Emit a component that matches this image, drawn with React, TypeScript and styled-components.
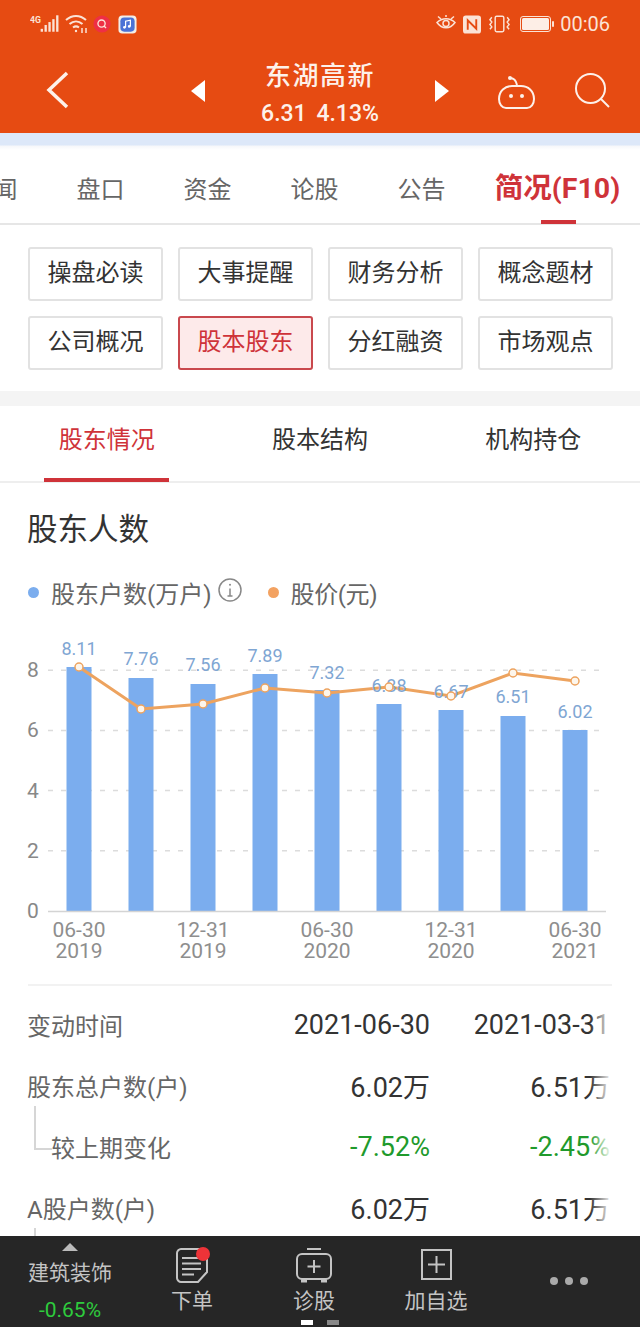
import React from 'react';
import styled, { createGlobalStyle } from 'styled-components';

const GlobalStyle = createGlobalStyle`
  html, body {
    margin: 0;
    padding: 0;
    background: #fff;
  }
  body {
    font-family: Roboto, "Noto Sans CJK SC", sans-serif;
  }
  * {
    box-sizing: border-box;
  }
`;

const Page = styled.div`
  width: 640px;
  height: 1327px;
  display: flex;
  flex-direction: column;
  overflow: hidden;
  background: #fff;
`;

const Header = styled.header`
  height: 133px;
  flex: none;
  background: #e64b12;
  color: #fff;
`;

const StatusBar = styled.div`
  height: 48px;
  padding: 0 30px;
  display: flex;
  align-items: center;
  justify-content: space-between;
`;

const StatusGroup = styled.div`
  display: flex;
  align-items: center;
  gap: 5px;
`;

const RightStatus = styled(StatusGroup)`
  gap: 7px;
`;

const Clock = styled.span`
  font-size: 20px;
  color: #fbe3d6;
  margin-left: -2px;
`;

const NavBar = styled.nav`
  height: 85px;
  padding: 0 0 0 46px;
  display: flex;
  align-items: flex-start;
`;

const NavIcon = styled.svg<{ $ml: number; $top: number }>`
  flex: none;
  margin-left: ${props => props.$ml}px;
  margin-top: ${props => props.$top}px;
`;

const Stock = styled.div`
  width: 200px;
  margin-left: 15px;
  text-align: center;
`;

const StockName = styled.div`
  font-size: 26px;
  line-height: 36px;
  margin-top: 10px;
  font-weight: 500;
  letter-spacing: 1.5px;
  color: #fdf1ea;
`;

const StockQuote = styled.div`
  font-size: 23px;
  line-height: 30px;
  margin-top: 5px;
  font-weight: 500;
  color: #fdf1ea;
  word-spacing: 4px;
`;

const Strip = styled.div`
  height: 17px;
  flex: none;
  background: linear-gradient(#dde8f9 0, #dde8f9 12px, #f6f7fa 13px, #fff 17px);
`;

const Tabs = styled.div`
  height: 75px;
  flex: none;
  display: flex;
  margin-left: -60px;
  border-bottom: 2px solid #e6e6e6;
`;

const Tab = styled.div<{ $active?: boolean }>`
  position: relative;
  flex: none;
  width: ${props => (props.$active ? 165 : 107)}px;
  padding-top: ${props => (props.$active ? 21 : 22)}px;
  text-align: center;
  white-space: nowrap;
  font-size: ${props => (props.$active ? 28.5 : 24)}px;
  line-height: 36px;
  font-weight: ${props => (props.$active ? 700 : 400)};
  color: ${props => (props.$active ? '#cf3339' : '#666')};

  ${props =>
    props.$active &&
    `&::after {
      content: '';
      position: absolute;
      left: 66px;
      bottom: -1px;
      width: 35px;
      height: 4px;
      background: #cf3339;
    }`}
`;

const Shortcuts = styled.div`
  height: 166px;
  flex: none;
  padding: 22px 27px 0 28px;
  display: grid;
  grid-template-columns: repeat(4, 135px);
  grid-auto-rows: 54px;
  gap: 15px;
`;

const Shortcut = styled.div<{ $active?: boolean }>`
  display: flex;
  align-items: center;
  justify-content: center;
  padding-bottom: 7px;
  font-size: 24px;
  border-radius: 3px;
  border: 2px solid ${props => (props.$active ? '#c9484d' : '#e2e2e2')};
  background: ${props => (props.$active ? '#fdeaea' : '#fff')};
  color: ${props => (props.$active ? '#cf3339' : '#333')};
`;

const Gap = styled.div`
  height: 15px;
  flex: none;
  background: #f4f4f4;
`;

const SubTabs = styled.div`
  height: 77px;
  flex: none;
  display: grid;
  grid-template-columns: repeat(3, 1fr);
  border-bottom: 2px solid #eee;
`;

const SubTab = styled.div<{ $active?: boolean }>`
  position: relative;
  padding-top: 16px;
  text-align: center;
  font-size: 24px;
  line-height: 36px;
  color: ${props => (props.$active ? '#cf3339' : '#333')};

  ${props =>
    props.$active &&
    `&::after {
      content: '';
      position: absolute;
      left: 44px;
      bottom: -1px;
      width: 125px;
      height: 4px;
      background: #cf3339;
    }`}
`;

const Content = styled.main`
  flex: 1;
  min-height: 0;
  overflow: hidden;
`;

const SectionTitle = styled.h2`
  margin: 26px 0 0 27px;
  font-size: 30.500px;
  line-height: 42px;
  font-weight: 400;
  color: #333;
`;

const Legend = styled.div`
  margin: 23px 0 0 28px;
  height: 36px;
  display: flex;
  align-items: center;
  font-size: 24px;
  color: #666;
`;

const LegendDot = styled.span<{ $color: string }>`
  width: 11px;
  height: 11px;
  border-radius: 50%;
  margin-right: 12px;
  background: ${props => props.$color};
`;

const LegendLabel = styled.span`
  white-space: nowrap;
`;

const InfoIcon = styled.svg`
  margin: -5px 0 0 6px;
  flex: none;
`;

const OrangeKey = styled.span`
  display: flex;
  align-items: center;
  margin-left: 26px;
  letter-spacing: -0.4px;
`;

const Chart = styled.svg`
  display: block;
  width: 640px;
  height: 340px;
  margin-top: 20px;
  font-family: Roboto, "Noto Sans CJK SC", sans-serif;
`;

const Divider = styled.div`
  height: 2px;
  margin: 14px 28px 0;
  background: #f2f2f2;
`;

const Table = styled.div`
  position: relative;
  margin-top: 8px;

  &::after {
    content: '';
    position: absolute;
    top: 0;
    bottom: 0;
    left: 590px;
    width: 50px;
    background: linear-gradient(to right, rgba(255, 255, 255, 0), #fff 44%);
  }
`;

const Row = styled.div`
  height: 61px;
  padding-left: 28px;
  display: grid;
  grid-template-columns: 222px 180px 180px;
  align-items: center;
  white-space: nowrap;
`;

const RowLabel = styled.div<{ $sub?: boolean }>`
  position: relative;
  font-size: 24px;
  color: #666;
  margin-left: -1px;
  padding-left: ${props => (props.$sub ? 24 : 0)}px;

  ${props =>
    props.$sub &&
    `&::before {
      content: '';
      position: absolute;
      left: 7px;
      bottom: 14px;
      width: 16px;
      height: 42px;
      border-left: 2px solid #d6d6d6;
      border-bottom: 2px solid #d6d6d6;
    }`}
`;

const RowValue = styled.div<{ $down?: boolean }>`
  text-align: right;
  font-size: 27px;
  color: ${props => (props.$down ? '#1f9a2c' : '#333')};
`;

const BottomNav = styled.footer`
  position: relative;
  height: 91px;
  flex: none;
  display: grid;
  grid-template-columns: 140px 104px 140px 104px 152px;
  background: #262626;
  color: #c4c4c4;
`;

const Sector = styled.div`
  display: flex;
  flex-direction: column;
  align-items: center;
  padding-top: 7px;
`;

const SectorArrow = styled.span`
  width: 0;
  height: 0;
  border-left: 8px solid transparent;
  border-right: 8px solid transparent;
  border-bottom: 8px solid #bbb;
`;

const SectorName = styled.span`
  font-size: 21px;
  line-height: 30px;
  margin-top: 7px;
`;

const SectorChange = styled.span`
  font-size: 21px;
  line-height: 26px;
  margin-top: 9px;
  color: #2ecb3d;
`;

const NavItem = styled.div`
  display: flex;
  flex-direction: column;
  align-items: center;
  padding-top: 12px;
`;

const NavIconBox = styled.div`
  position: relative;
  height: 36px;
  display: flex;
  align-items: flex-start;
`;

const Badge = styled.span`
  position: absolute;
  top: -1px;
  right: -2px;
  width: 14px;
  height: 14px;
  border-radius: 50%;
  background: #ee3338;
`;

const NavLabel = styled.span`
  font-size: 21px;
  line-height: 30px;
  margin-top: 2px;
`;

const More = styled.div`
  display: flex;
  align-items: center;
  justify-content: center;
  gap: 7px;
  padding: 0 0 2px 10px;
`;

const MoreDot = styled.span`
  width: 8px;
  height: 8px;
  border-radius: 50%;
  background: #aaa;
`;

const Pager = styled.div`
  position: absolute;
  left: 301px;
  bottom: 2px;
  display: flex;
  gap: 14px;
`;

const PagerMark = styled.span<{ $on?: boolean }>`
  width: 12px;
  height: 5px;
  background: ${props => (props.$on ? '#fff' : '#888')};
`;

const mainTabs = ['新闻', '盘口', '资金', '论股', '公告'];
const shortcuts = ['操盘必读', '大事提醒', '财务分析', '概念题材', '公司概况', '股本股东', '分红融资', '市场观点'];
const subTabs = ['股东情况', '股本结构', '机构持仓'];

const BAR_COLOR = '#7badee';
const LINE_COLOR = '#eda35f';
const Y_BASE = 911;
const Y_UNIT = 30.1;

const points = [
  { x: 79, value: '8.11', top: 667, labelY: 649, price: 667 },
  { x: 141, value: '7.76', top: 678, labelY: 659, price: 709 },
  { x: 203, value: '7.56', top: 684, labelY: 665, price: 704 },
  { x: 265, value: '7.89', top: 674, labelY: 656, price: 688 },
  { x: 327, value: '7.32', top: 690, labelY: 673, price: 693 },
  { x: 389, value: '6.88', top: 704, labelY: 686, price: 687 },
  { x: 451, value: '6.67', top: 710, labelY: 692, price: 696 },
  { x: 513, value: '6.51', top: 716, labelY: 697, price: 673 },
  { x: 575, value: '6.02', top: 730, labelY: 712, price: 681 },
];

const xLabels = [
  { x: 79, top: '06-30', bottom: '2019' },
  { x: 203, top: '12-31', bottom: '2019' },
  { x: 327, top: '06-30', bottom: '2020' },
  { x: 451, top: '12-31', bottom: '2020' },
  { x: 575, top: '06-30', bottom: '2021' },
];

const SharesChart = () => (
  <Chart viewBox="0 630 640 340">
    {[2, 4, 6, 8].map(tick => (
      <line
        key={tick}
        x1="48"
        x2="606"
        y1={Y_BASE - tick * Y_UNIT}
        y2={Y_BASE - tick * Y_UNIT}
        stroke="#dcdcdc"
        strokeWidth="1.5"
        strokeDasharray="5 8"
      />
    ))}
    {[0, 2, 4, 6, 8].map(tick => (
      <text key={tick} x="33" y={Y_BASE - tick * Y_UNIT + 7} textAnchor="middle" fontSize="21" fill="#888">
        {tick}
      </text>
    ))}
    {points.map(p => (
      <rect key={p.x} x={p.x - 12.5} y={p.top} width="25" height={Y_BASE - p.top} fill={BAR_COLOR} />
    ))}
    <line x1="48" x2="606" y1="911.5" y2="911.5" stroke="#d4d4d4" strokeWidth="1.5" />
    <polyline
      points={points.map(p => `${p.x},${p.price}`).join(' ')}
      fill="none"
      stroke={LINE_COLOR}
      strokeWidth="3"
    />
    {points.map(p => (
      <text key={p.x} x={p.x} y={p.labelY + 6} textAnchor="middle" fontSize="18" fill="#7fa6d3">
        {p.value}
      </text>
    ))}
    {points.map(p => (
      <circle key={p.x} cx={p.x} cy={p.price} r="4" fill="#fdf6ec" stroke={LINE_COLOR} strokeWidth="1.5" />
    ))}
    {xLabels.map(l => (
      <text key={l.x} x={l.x} textAnchor="middle" fontSize="21" fill="#8e8e8e">
        <tspan x={l.x} y="937">
          {l.top}
        </tspan>
        <tspan x={l.x} y="958">
          {l.bottom}
        </tspan>
      </text>
    ))}
  </Chart>
);

export default function App() {
  return (
    <Page>
      <GlobalStyle />
      <Header>
        <StatusBar>
          <StatusGroup>
            <svg width="30" height="20" viewBox="0 0 31 20" fill="#fbe3d6">
              <text x="0" y="9" fontSize="9" fontWeight="700" fontFamily="Roboto">
                4G
              </text>
              <rect x="11" y="15" width="2.4" height="3" />
              <rect x="15" y="11" width="2.4" height="7" />
              <rect x="19" y="8" width="2.4" height="10" />
              <rect x="23" y="5" width="2.4" height="13" />
              <rect x="27" y="1" width="2.4" height="17" />
            </svg>
            <svg width="23" height="20" viewBox="0 0 23 20" fill="none" stroke="#fbe3d6" strokeWidth="2">
              <path d="M1 6c6-5.500 14-5.500 20 0" />
              <path d="M4.500 10c4-3.500 9-3.500 13 0" />
              <path d="M8 13.500c2-1.500 4-1.500 6 0" />
              <circle cx="11" cy="17" r="1.200" fill="#fbe3d6" stroke="none" />
              <path d="M17 14v5M21 14v5" strokeWidth="1.500" />
            </svg>
            <svg width="18" height="20" viewBox="0 0 20 20" fill="none">
              <circle cx="10" cy="10" r="9.500" fill="#ee2f45" />
              <circle cx="9.500" cy="9.500" r="4" stroke="#fde4d8" strokeWidth="1.500" />
              <path d="M12 12l2.500 2.500" stroke="#fde4d8" strokeWidth="1.500" />
            </svg>
            <svg width="19" height="19" viewBox="0 0 20 20" fill="none" style={{ marginLeft: 2 }}>
              <rect width="19" height="19" x="0.500" y="0.500" rx="4" fill="#f2eee8" />
              <rect width="15" height="15" x="2.500" y="2.500" rx="4" fill="#4a72d6" />
              <path d="M8 13V6.500l5-1V12" stroke="#fff" strokeWidth="1.300" />
              <circle cx="6.800" cy="13" r="1.400" fill="#fff" />
              <circle cx="11.800" cy="12" r="1.400" fill="#fff" />
            </svg>
          </StatusGroup>
          <RightStatus>
            <svg width="20" height="18" viewBox="0 0 20 18" fill="none" stroke="#fbe3d6" strokeWidth="1.500">
              <path d="M1 7.500c5-5 13-5 18 0-5 7-13 7-18 0z" />
              <circle cx="10" cy="8.500" r="3" />
              <path d="M2 1.500l3 2.500M18 1.500l-3 2.500M10 0v2" />
            </svg>
            <svg width="18" height="19" viewBox="0 0 19 19">
              <rect width="19" height="19" rx="3" fill="#fbe3d6" />
              <path d="M5 15V5l9 9V4" fill="none" stroke="#e64b12" strokeWidth="2" />
            </svg>
            <svg width="23" height="18" viewBox="0 0 24 18" fill="none" stroke="#fbe3d6" strokeWidth="1.500">
              <rect x="7.500" y="1" width="9" height="16" rx="1.500" />
              <path d="M4 2l-2 2.500L4 7 2 9.500 4 12 2 14.500M20 2l2 2.500L20 7l2 2.500L20 12l2 2.500" />
            </svg>
            <svg width="35" height="18" viewBox="0 0 35 18" style={{ marginLeft: 2 }}>
              <rect x="0.500" y="1.500" width="30" height="15" rx="2.500" fill="none" stroke="#fbe3d6" />
              <rect x="2" y="3" width="27" height="12" rx="1.500" fill="#fdeee6" />
              <rect x="32" y="6" width="2" height="6" rx="1" fill="#fbe3d6" />
            </svg>
            <Clock>00:06</Clock>
          </RightStatus>
        </StatusBar>
        <NavBar>
          <NavIcon width="23" height="38" viewBox="0 0 23 38" $ml={0} $top={23} fill="none" stroke="#fdf1ea" strokeWidth="3.500">
            <path d="M21 2L3 19l18 17" />
          </NavIcon>
          <NavIcon width="14" height="22" viewBox="0 0 14 22" $ml={122} $top={32} fill="#fff">
            <path d="M14 0v22L0 11z" />
          </NavIcon>
          <Stock>
            <StockName>东湖高新</StockName>
            <StockQuote>6.31 4.13%</StockQuote>
          </Stock>
          <NavIcon width="14" height="22" viewBox="0 0 14 22" $ml={15} $top={32} fill="#fff">
            <path d="M0 0v22l14-11z" />
          </NavIcon>
          <NavIcon width="37" height="34" viewBox="0 0 37 34" $ml={49} $top={27} fill="none" stroke="#fdf1ea" strokeWidth="2">
            <circle cx="12" cy="3" r="2" fill="#fdf1ea" stroke="none" />
            <path d="M12 3c4 0 6 2 7 7" />
            <path d="M1 24c0-8 6-13 13-13h9c7 0 13 5 13 13 0 5-3 9-7 9H8c-4 0-7-4-7-9z" />
            <circle cx="13" cy="21" r="2" fill="#fdf1ea" stroke="none" />
            <circle cx="24" cy="21" r="2" fill="#fdf1ea" stroke="none" />
          </NavIcon>
          <NavIcon width="35" height="35" viewBox="0 0 35 35" $ml={40} $top={25} fill="none" stroke="#fdf1ea" strokeWidth="2">
            <circle cx="15.500" cy="15.500" r="14.500" />
            <path d="M26 26l8 8" />
          </NavIcon>
        </NavBar>
      </Header>
      <Strip />
      <Tabs>
        {mainTabs.map(name => (
          <Tab key={name}>{name}</Tab>
        ))}
        <Tab $active>简况(F10)</Tab>
      </Tabs>
      <Shortcuts>
        {shortcuts.map(name => (
          <Shortcut key={name} $active={name === '股本股东'}>
            {name}
          </Shortcut>
        ))}
      </Shortcuts>
      <Gap />
      <SubTabs>
        {subTabs.map((name, i) => (
          <SubTab key={name} $active={i === 0}>
            {name}
          </SubTab>
        ))}
      </SubTabs>
      <Content>
        <SectionTitle>股东人数</SectionTitle>
        <Legend>
          <LegendDot $color={BAR_COLOR} />
          <LegendLabel>股东户数(万户)</LegendLabel>
          <InfoIcon width="24" height="24" viewBox="0 0 24 24" fill="none" stroke="#888" strokeWidth="1.500">
            <circle cx="12" cy="12" r="11" />
            <path d="M12 10.500V18M9.500 18h5" />
            <circle cx="12" cy="6.800" r="1" fill="#888" stroke="none" />
          </InfoIcon>
          <OrangeKey>
            <LegendDot $color="#f3a261" />
            <LegendLabel>股价(元)</LegendLabel>
          </OrangeKey>
        </Legend>
        <SharesChart />
        <Divider />
        <Table>
          <Row>
            <RowLabel>变动时间</RowLabel>
            <RowValue>2021-06-30</RowValue>
            <RowValue>2021-03-31</RowValue>
          </Row>
          <Row>
            <RowLabel>股东总户数(户)</RowLabel>
            <RowValue>6.02万</RowValue>
            <RowValue>6.51万</RowValue>
          </Row>
          <Row>
            <RowLabel $sub>较上期变化</RowLabel>
            <RowValue $down>-7.52%</RowValue>
            <RowValue $down>-2.45%</RowValue>
          </Row>
          <Row>
            <RowLabel>A股户数(户)</RowLabel>
            <RowValue>6.02万</RowValue>
            <RowValue>6.51万</RowValue>
          </Row>
          <Row>
            <RowLabel $sub>较上期变化</RowLabel>
            <RowValue $down>-7.52%</RowValue>
            <RowValue $down>-2.45%</RowValue>
          </Row>
        </Table>
      </Content>
      <BottomNav>
        <Sector>
          <SectorArrow />
          <SectorName>建筑装饰</SectorName>
          <SectorChange>-0.65%</SectorChange>
        </Sector>
        <NavItem>
          <NavIconBox>
            <svg width="32" height="35" viewBox="0 0 32 35" fill="none" stroke="#c4c4c4" strokeWidth="2">
              <path d="M5 1h22c2 0 4 2 4 4v19l-9 10H5c-2 0-4-2-4-4V5c0-2 2-4 4-4z" />
              <path d="M6 10h19M6 15.500h19M6 21h19M6 26.500h12" />
            </svg>
            <Badge />
          </NavIconBox>
          <NavLabel>下单</NavLabel>
        </NavItem>
        <NavItem>
          <NavIconBox>
            <svg width="36" height="36" viewBox="0 0 36 36" fill="none" stroke="#c4c4c4" strokeWidth="2">
              <path d="M11 1h14" />
              <rect x="1" y="6" width="34" height="25" rx="5" />
              <path d="M5 33h6M25 33h6" strokeWidth="3" />
              <path d="M18 12v13M11.500 18.500h13" />
            </svg>
          </NavIconBox>
          <NavLabel>诊股</NavLabel>
        </NavItem>
        <NavItem>
          <NavIconBox>
            <svg width="31" height="32" viewBox="0 0 31 32" fill="none" stroke="#c4c4c4" strokeWidth="2">
              <rect x="1" y="2" width="29" height="29" />
              <path d="M15.500 8v17M7 16.500h17" />
            </svg>
          </NavIconBox>
          <NavLabel>加自选</NavLabel>
        </NavItem>
        <More>
          <MoreDot />
          <MoreDot />
          <MoreDot />
        </More>
        <Pager>
          <PagerMark $on />
          <PagerMark />
        </Pager>
      </BottomNav>
    </Page>
  );
}
